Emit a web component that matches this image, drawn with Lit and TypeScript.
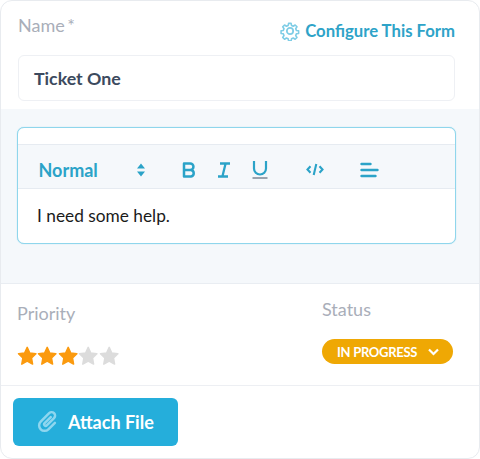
import { LitElement, html, css } from "lit";
import { customElement } from "lit/decorators.js";

const star = (c: string) => html`<svg class="star" viewBox="0 0 20 20"><path fill=${c} stroke=${c} stroke-width="1.5" stroke-linejoin="round" d="M10 1.4l2.6 5.6 6.1.8-4.4 4.2 1.1 6.1L10 15.1l-5.4 3 1.1-6.1L1.3 7.8l6.1-.8z"/></svg>`;

@customElement("app-root")
export class AppRoot extends LitElement {
  static styles = css`
    :host { display: block; width: 480px; height: 459px; font-family: Lato, sans-serif; background: #fff; }
    * { box-sizing: border-box; }
    .card { width: 480px; height: 459px; border: 1px solid #e8ebef; border-radius: 12px; overflow: hidden; display: flex; flex-direction: column; background: #fff; }
    .top { height: 108px; padding: 0 24px 0 17px; display: flex; flex-direction: column; flex: none; }
    .top-row { height: 54px; display: flex; justify-content: space-between; }
    .label { font-size: 18px; line-height: 22px; color: #a9aeb9; }
    .name-label { margin-top: 13px; word-spacing: -2px; }
    .config { display: flex; align-items: center; gap: 5px; height: 20px; margin-top: 20px; color: #2ea3c8; font-size: 16.7px; font-weight: 700; }
    .config svg { width: 20px; height: 20px; margin-top: -1px; }
    .input { width: 437px; height: 46px; border: 1px solid #eef0f4; border-radius: 6px; padding-left: 15px; display: flex; align-items: center; font-size: 17.8px; font-weight: 700; color: #3c4a5e; }
    .mid { height: 175px; flex: none; background: #f5f8fb; padding: 18px 23px 0 16px; border-bottom: 1px solid #e9edf2; }
    .editor { height: 117px; border: 1px solid #8fd6ec; box-shadow: 0 0 1px #8fd6ec; border-radius: 7px; background: #fff; display: flex; flex-direction: column; }
    .blank { height: 16px; flex: none; }
    .toolbar { height: 45px; flex: none; background: #f5f8fb; border-top: 1px solid #e6ebf1; border-bottom: 1px solid #e6ebf1; display: grid; grid-template-columns: 97px 46px 35px 35px 54px 54px 30px; align-items: center; padding: 6px 0 0 20.5px; color: #2ba3c8; }
    .normal { font-size: 18px; font-weight: 700; }
    .toolbar svg { display: block; }
    .body { padding: 16px 0 0 19px; font-size: 17.3px; line-height: 22px; color: #1b1b1b; }
    .meta { height: 102px; flex: none; border-bottom: 1px solid #edeff3; display: flex; justify-content: space-between; padding: 0 26px 0 16px; }
    .priority-label { margin-top: 18px; }
    .stars { display: flex; margin-top: 22px; }
    .star { width: 20.4px; height: 20px; display: block; }
    .status { width: 131px; }
    .status-label { margin-top: 14px; }
    .pill { margin-top: 19px; height: 25px; border-radius: 13px; background: #efa804; color: #fff; display: flex; align-items: center; padding-left: 15px; gap: 11px; font-size: 13px; letter-spacing: -0.3px; font-weight: 700; }
    .foot { flex: 1; padding: 12px 0 0 12px; }
    .btn { width: 165px; height: 48px; border-radius: 6px; background: #25aedb; color: #fff; display: flex; align-items: center; padding-left: 22px; gap: 7px; font-size: 18px; font-weight: 700; }
  `;

  render() {
    return html`
      <div class="card">
        <div class="top">
          <div class="top-row">
            <div class="label name-label">Name *</div>
            <div class="config">
              <svg viewBox="0 0 24 24" fill="none" stroke="#7fcde6" stroke-width="2.1" stroke-linejoin="round">
                <circle cx="12" cy="12" r="3.8"/>
                <path d="M10.3 2h3.4l.6 3 2.2.9 2.6-1.7 2.4 2.4-1.7 2.6.9 2.2 3 .6v3.4l-3 .6-.9 2.2 1.7 2.6-2.4 2.4-2.6-1.7-2.2.9-.6 3h-3.4l-.6-3-2.2-.9-2.6 1.7-2.4-2.4 1.7-2.6-.9-2.2-3-.6v-3.4l3-.6.9-2.2-1.7-2.6 2.4-2.4 2.6 1.7 2.2-.9z" transform="translate(12 12) scale(.9) translate(-12.2 -12.2)"/>
              </svg>
              Configure This Form
            </div>
          </div>
          <div class="input">Ticket One</div>
        </div>
        <div class="mid">
          <div class="editor">
            <div class="blank"></div>
            <div class="toolbar">
              <span class="normal">Normal</span>
              <svg width="10" height="16" viewBox="0 0 10 16" fill="currentColor"><path d="M5 1.5l4 5H1zM5 14.5l-4-5h8z"/></svg>
              <svg width="15" height="16" viewBox="0 0 15 16" fill="none" stroke="currentColor" stroke-width="2.5" stroke-linejoin="round"><path d="M2 1.5h6.2a3.2 3.2 0 0 1 0 6.5H2zM2 8h7a3.3 3.3 0 0 1 0 6.5H2z"/></svg>
              <svg width="14" height="16" viewBox="0 0 14 16" fill="none" stroke="currentColor" stroke-width="2.3"><path d="M3 1.5h10M1 14.5h10M8.6 1.5L5.4 14.5"/></svg>
              <svg width="16" height="19" viewBox="0 0 16 19" fill="none"><path d="M2 1v7.5a6 6 0 0 0 12 0V1" stroke="currentColor" stroke-width="2.2"/><path d="M0.5 18h15" stroke="#7b8794" stroke-width="1.6"/></svg>
              <svg width="18" height="13" viewBox="0 0 18 13" fill="none" stroke="currentColor" stroke-width="2.1"><path d="M4.5 3.2L1.5 6.5l3 3.3M13.5 3.2l3 3.3-3 3.3M10.3 1L7.7 12"/></svg>
              <svg width="19" height="16" viewBox="0 0 19 16" fill="none" stroke="currentColor" stroke-width="2.4" stroke-linecap="round"><path d="M1.5 2h9M1.5 8h16M1.5 14h14"/></svg>
            </div>
            <div class="body">I need some help.</div>
          </div>
        </div>
        <div class="meta">
          <div>
            <div class="label priority-label">Priority</div>
            <div class="stars">
              ${star("#fb9a0e")}${star("#fb9a0e")}${star("#fb9a0e")}${star("#dcdcdc")}${star("#dcdcdc")}
            </div>
          </div>
          <div class="status">
            <div class="label status-label">Status</div>
            <div class="pill">
              IN PROGRESS
              <svg width="11" height="8" viewBox="0 0 11 8" fill="none" stroke="#fff" stroke-width="2.2"><path d="M1 1.5l4.5 4.5L10 1.5"/></svg>
            </div>
          </div>
        </div>
        <div class="foot">
          <div class="btn">
            <svg width="26" height="26" viewBox="0 0 24 24" fill="none" stroke="#8ed6ef" stroke-width="2.3" stroke-linecap="round" stroke-linejoin="round"><path transform="rotate(45 12 12)" d="M17 8v8.5a5 5 0 0 1-10 0V5.5a3.2 3.2 0 0 1 6.4 0V15a1.4 1.4 0 0 1-2.8 0V7"/></svg>
            Attach File
          </div>
        </div>
      </div>
    `;
  }
}
